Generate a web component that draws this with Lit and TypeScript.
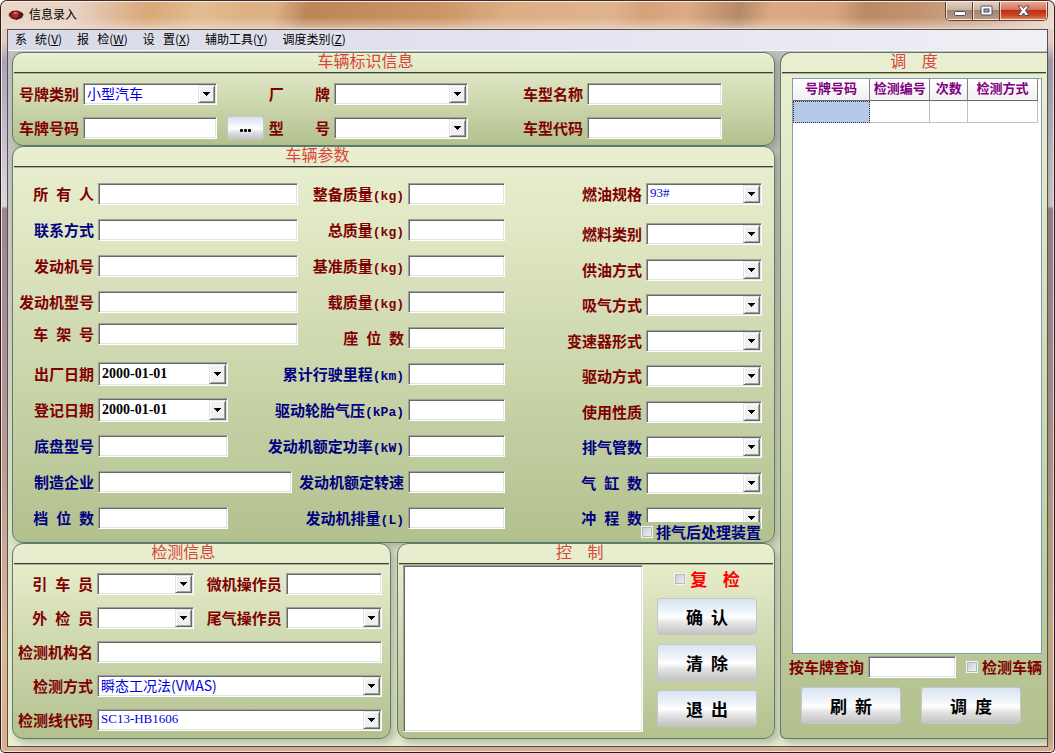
import { LitElement, html, css, svg, nothing } from "lit";
import { customElement, state } from "lit/decorators.js";
import { classMap } from "lit/directives/class-map.js";

type Tone = "red" | "navy";
type Kind = "text" | "combo" | "date";

interface Field {
  id: string;
  label: string;
  tone?: Tone;
  kind?: Kind;
  value?: string;
  size?: "short" | "medium";
}

const IDENTITY: Field[] = [
  { id: "plate-type", label: "号牌类别", kind: "combo", value: "小型汽车" },
  { id: "brand", label: "厂    牌", kind: "combo" },
  { id: "model-name", label: "车型名称" },
  { id: "plate-no", label: "车牌号码" },
  { id: "model", label: "型    号", kind: "combo" },
  { id: "model-code", label: "车型代码" },
];

const OWNER: Field[] = [
  { id: "owner", label: "所 有 人" },
  { id: "contact", label: "联系方式", tone: "navy" },
  { id: "engine-no", label: "发动机号" },
  { id: "engine-model", label: "发动机型号" },
];

const FRAME_NO: Field[] = [{ id: "vin", label: "车 架 号" }];

const DATES: Field[] = [
  { id: "made", label: "出厂日期", kind: "date", value: "2000-01-01", size: "short" },
  { id: "registered", label: "登记日期", kind: "date", value: "2000-01-01", size: "short" },
  { id: "chassis", label: "底盘型号", tone: "navy", size: "short" },
  { id: "maker", label: "制造企业", tone: "navy", size: "medium" },
  { id: "gears", label: "档 位 数", tone: "navy", size: "short" },
];

const MASSES: Field[] = [
  { id: "curb", label: "整备质量(kg)" },
  { id: "gross", label: "总质量(kg)" },
  { id: "reference", label: "基准质量(kg)" },
  { id: "payload", label: "载质量(kg)" },
  { id: "seats", label: "座 位 数" },
  { id: "mileage", label: "累计行驶里程(km)", tone: "navy" },
  { id: "tyre", label: "驱动轮胎气压(kPa)", tone: "navy" },
  { id: "power", label: "发动机额定功率(kW)", tone: "navy" },
  { id: "speed", label: "发动机额定转速", tone: "navy" },
  { id: "displacement", label: "发动机排量(L)", tone: "navy" },
];

const FUEL: Field[] = [{ id: "fuel-grade", label: "燃油规格", kind: "combo", value: "93#" }];

const TECH: Field[] = [
  { id: "fuel-type", label: "燃料类别", kind: "combo" },
  { id: "fuel-supply", label: "供油方式", kind: "combo" },
  { id: "intake", label: "吸气方式", kind: "combo" },
  { id: "gearbox", label: "变速器形式", kind: "combo" },
  { id: "drive", label: "驱动方式", kind: "combo" },
  { id: "usage", label: "使用性质", kind: "combo" },
  { id: "pipes", label: "排气管数", tone: "navy", kind: "combo" },
  { id: "cylinders", label: "气 缸 数", tone: "navy", kind: "combo" },
  { id: "strokes", label: "冲 程 数", tone: "navy", kind: "combo" },
];

const INSPECT_TOP: Field[] = [
  { id: "driver", label: "引 车 员", kind: "combo" },
  { id: "operator", label: "微机操作员" },
  { id: "outer", label: "外 检 员", kind: "combo" },
  { id: "gas", label: "尾气操作员", kind: "combo" },
];

const INSPECT_WIDE: Field[] = [
  { id: "agency", label: "检测机构名" },
  { id: "method", label: "检测方式", kind: "combo", value: "瞬态工况法(VMAS)" },
  { id: "line", label: "检测线代码", kind: "combo", value: "SC13-HB1606" },
];

const MENU: [string, string][] = [
  ["系   统", "V"],
  ["报   检", "W"],
  ["设   置", "X"],
  ["辅助工具", "Y"],
  ["调度类别", "Z"],
];

/* Latin letters and blanks are set in a half-width face beside the Chinese. */
const mixed = (text: string) =>
  text
    .split(/([\x20-\x7e]+)/)
    .filter(Boolean)
    .map((part) => (/^[\x20-\x7e]/.test(part) ? html`<span class="half">${part}</span>` : part));

@customElement("app-root")
export class AppRoot extends LitElement {
  @state() private selected = 0;

  static styles = css`
    :host {
      display: block;
      font-family: "Noto Sans CJK SC", sans-serif;
      font-size: 15px;
      line-height: 20px;
      color: #000;
    }
    * {
      box-sizing: border-box;
    }
    button,
    input,
    select,
    textarea {
      font: inherit;
      margin: 0;
      border-radius: 0;
      outline: none;
    }
    .half {
      font-family: "Liberation Mono", monospace;
      font-size: 13px;
      line-height: 0;
      white-space: pre;
    }

    .window {
      display: flex;
      flex-direction: column;
      min-height: 100vh;
      padding: 0 6px 5px;
      border: 1px solid #2b1d1e;
      border-top-color: #4a2a22;
      border-radius: 7px 7px 5px 5px;
      box-shadow: inset 0 0 0 1px #f2e4da;
      background: linear-gradient(#e6d2c4 0, #e4cdbf 40px, #a9a2bd 60px, #c9c3d4 150px, #ded6e0 205px, #9c8496 208px, #a9909a 340px, #b99a92 450px, #d9b896 640px, #d5b090 100%);
    }
    .titlebar {
      display: flex;
      align-items: flex-start;
      height: 28px;
      margin: 0 -5px;
      padding: 0 5px 0 6px;
      border-top: 1px solid #fbeee4;
      border-bottom: 1px solid #e9dacd;
      border-radius: 6px 6px 0 0;
      background:
        linear-gradient(rgba(255, 255, 255, 0) 60%, rgba(240, 225, 215, 0.55)),
        linear-gradient(100deg, #ead5c6 0, #e8d3c5 7%, #e0bfa4 10%, #d9a878 14%, #e2bd92 19%, #ddb184 23%, #dcb187 26%, #bd8659 29%, #c58e62 36%, #cc9668 42%, #dcae84 48%, #dfb38c 58%, #d5a27a 61%, #dcab84 65%, #b58a66 70%, #dba982 73%, #d8a67e 79%, #ba8a64 82%, #c2936f 87%, #d2ae94 94%, #ecdccf 100%);
    }
    .app-icon {
      width: 16px;
      height: 16px;
      margin: 5px 5px 0 0;
    }
    .caption {
      flex: 1;
      margin: 0;
      padding-top: 2px;
      font-size: 12px;
      font-weight: 400;
    }
    .win-buttons {
      display: flex;
      height: 19px;
      border: 1px solid #5b4238;
      border-top: 0;
      border-radius: 0 0 5px 5px;
      overflow: hidden;
    }
    .win-btn {
      display: grid;
      place-items: center;
      width: 27px;
      padding: 0;
      border: 1px solid rgba(255, 245, 238, 0.75);
      border-top: 0;
      background: linear-gradient(#e0cfc2 0, #cdb3a0 45%, #a58570 50%, #b99a84 100%);
    }
    .win-btn + .win-btn {
      box-shadow: -1px 0 #5b4238;
    }
    .win-btn.close {
      width: 47px;
      background: linear-gradient(#e8a795 0, #d9735a 45%, #bd2f12 50%, #cf4a25 80%, #e08058 100%);
    }

    .client {
      flex: 1;
      display: flex;
      flex-direction: column;
      border: 1px solid #55504e;
      background: linear-gradient(#bdbdbd, #c6c8bd 30%, #dfe5c8 75%, #e8eed0);
    }
    .menu {
      display: flex;
      gap: 15px;
      height: 21px;
      padding: 0 7px;
      border-bottom: 1px solid #fafafc;
      background: linear-gradient(90deg, #d9dae7, #e8e9f3 75%, #f0f0f5);
    }
    .menu button {
      height: 18px;
      padding: 0;
      border: 0;
      background: none;
      font-size: 12px;
      line-height: 18px;
      white-space: pre;
    }
    .content {
      flex: 1;
      display: grid;
      grid-template-columns: 763fr 267fr;
      gap: 5px;
      padding: 1px 0 7px 4px;
    }
    .left {
      display: grid;
      grid-template-rows: auto 1fr auto;
      min-width: 0;
    }
    .bottom {
      display: grid;
      grid-template-columns: 1fr 1fr;
      gap: 6px;
    }

    .panel {
      display: flex;
      flex-direction: column;
      min-width: 0;
      border: 1px solid #5f7b6d;
      border-radius: 11px;
      background: linear-gradient(#e9efd0, #e3eac8 15%, #b2c18e);
      box-shadow: 4px 4px 7px rgba(90, 95, 80, 0.35);
    }
    .panel.side {
      border-right: 0;
      border-radius: 11px 0 0 6px;
    }
    .panel h2 {
      height: 20px;
      margin: 0 1px;
      border-bottom: 1px solid #3b4236;
      box-shadow: 0 1px #aab093;
      font-size: 16px;
      font-weight: 400;
      line-height: 14px;
      text-align: center;
      color: #d8453a;
    }
    .panel.identity h2 {
      padding-right: 56px;
    }
    .panel.params h2 {
      padding-right: 152px;
    }
    .panel.inspect h2 {
      padding-right: 36px;
    }
    .panel.control h2 {
      padding-right: 12px;
    }

    label {
      flex: none;
      font-weight: 700;
      white-space: nowrap;
      text-align: right;
      color: #800000;
    }
    label.navy {
      color: #000080;
    }

    .box {
      min-width: 0;
      width: 100%;
      height: 22px;
      padding: 0 3px;
      border: 1px solid;
      border-color: #a0a0a0 #fff #fff #a0a0a0;
      box-shadow: inset 1px 1px #696969, inset -1px -1px #e3e3e3;
      background: #fff;
      color: #0000e0;
      font-size: 14px;
      line-height: 18px;
    }
    .combo {
      position: relative;
      display: block;
      min-width: 0;
      width: 100%;
    }
    .combo .box {
      display: block;
      padding-bottom: 2px;
      appearance: none;
    }
    .combo .box.latin {
      font-family: "Liberation Serif", serif;
      font-size: 13px;
    }
    .combo .box.date {
      height: 24px;
      padding-bottom: 0;
      font-family: "Liberation Serif", serif;
      font-size: 14px;
      font-weight: 700;
      color: #000;
    }
    .arrow {
      position: absolute;
      top: 2px;
      right: 2px;
      bottom: 2px;
      width: 17px;
      display: grid;
      place-items: center;
      border: 1px solid;
      border-color: #e3e3e3 #696969 #696969 #e3e3e3;
      box-shadow: inset 1px 1px #fff, inset -1px -1px #a0a0a0;
      background: #f0f0f0;
      pointer-events: none;
    }
    .short {
      width: 65%;
    }
    .medium {
      width: 97%;
    }

    .id-grid {
      display: grid;
      grid-template-columns: 60px 134fr 43px 62px 134fr 111px 135fr;
      gap: 10px 4px;
      align-items: center;
      padding: 9px 52px 5px 6px;
    }
    .id-grid > * {
      min-height: 20px;
    }
    .cell {
      display: flex;
      align-items: center;
      height: 24px;
    }
    .push {
      border: 1px solid #c3c6cc;
      border-radius: 3px;
      background: linear-gradient(#d8e3f1 0, #eff4fa 35%, #fff 52%, #e4e4e4 68%, #c3c3c3 100%);
      color: #000;
      font-weight: 700;
    }
    .push.more {
      display: grid;
      place-items: center;
      justify-self: end;
      width: 37px;
      height: 24px;
      padding: 4px 0 0;
    }
    .push.big {
      height: 37px;
      padding: 0;
      font-size: 17px;
    }

    .param-grid {
      flex: 1;
      display: grid;
      grid-template-columns: 280fr 207fr 257fr;
      padding: 15px 12px 12px 5px;
    }
    .col {
      position: relative;
      display: flex;
      flex-direction: column;
      min-width: 0;
    }
    .group {
      display: flex;
      flex-direction: column;
      gap: 12px;
    }
    .group + .group {
      margin-top: 8px;
    }
    .group + .group + .group,
    .col.tech .group + .group {
      margin-top: 16px;
    }
    .col.tech .group + .group {
      flex: 1;
      justify-content: space-between;
      gap: 0;
    }
    .row {
      display: flex;
      align-items: center;
      justify-content: flex-end;
      gap: 4px;
      height: 24px;
    }
    .col.owner label {
      width: 76px;
    }
    .slot {
      flex: 1;
      min-width: 0;
    }
    .slot > * {
      vertical-align: top;
    }
    .col.mass .slot {
      flex: none;
      width: 97px;
    }
    .col.tech .slot {
      flex: none;
      width: 116px;
    }
    .after {
      position: absolute;
      right: 1px;
      bottom: -11px;
      display: flex;
      align-items: center;
      gap: 3px;
      height: 19px;
      background: #b5c492;
    }
    .tick {
      appearance: none;
      flex: none;
      width: 12px;
      height: 12px;
      border: 1px solid #f4f4f4;
      box-shadow: inset 0 0 0 1px #b4b8bd;
      background: linear-gradient(135deg, #c6cacf, #f4f4f4);
    }
    .tick:checked {
      background: #3b6ea5;
    }

    .inspect-grid {
      display: grid;
      grid-template-columns: 75px 97fr 84px 96fr;
      gap: 10px 4px;
      align-items: center;
      padding: 8px 8px 6px 5px;
    }
    .inspect-grid .wide {
      grid-column: span 3;
    }

    .control-body {
      flex: 1;
      display: flex;
      gap: 14px;
      padding: 0 17px 6px 5px;
    }
    .control-body textarea {
      flex: 1;
      height: auto;
      margin-top: 1px;
      resize: none;
    }
    .actions {
      display: flex;
      flex-direction: column;
      gap: 9px;
      width: 100px;
      padding-top: 5px;
    }
    .recheck {
      display: flex;
      align-items: center;
      justify-content: center;
      gap: 4px;
      height: 20px;
    }
    .recheck label {
      font-size: 17px;
      color: #f00;
    }

    .side-body {
      flex: 1;
      display: flex;
      flex-direction: column;
      padding: 5px 5px 14px 8px;
    }
    .list {
      flex: 1;
      margin: 0 0 1px 3px;
      border: 1px solid #7f9db9;
      background: #fff;
    }
    table {
      width: calc(100% - 3px);
      border-collapse: separate;
      border-spacing: 0;
      table-layout: fixed;
    }
    th {
      height: 22px;
      padding: 0 0 3px;
      border-right: 1px solid #848484;
      border-bottom: 1px solid #696969;
      background: linear-gradient(#fff, #f0f0f0);
      font-size: 13px;
      line-height: 18px;
      font-weight: 700;
      color: #800080;
      white-space: nowrap;
    }
    td {
      height: 22px;
      padding: 0;
      border-right: 1px solid #c0c0c0;
      border-bottom: 1px solid #c0c0c0;
    }
    td.active {
      border: 1px dotted #3a3420;
      background: #b5caea;
    }
    .c1 {
      width: 31.5%;
    }
    .c2 {
      width: 24.5%;
    }
    .c3 {
      width: 15.5%;
    }
    .query {
      display: flex;
      align-items: center;
      gap: 4px;
      height: 24px;
    }
    .query .box {
      flex: 1;
    }
    .query .tick {
      margin-left: 6px;
    }
    .side-actions {
      display: grid;
      grid-template-columns: 1fr 1fr;
      gap: 20px;
      padding: 8px 21px 0 12px;
    }
  `;

  private control(f: Field) {
    const size = { short: f.size === "short", medium: f.size === "medium" };
    if (!f.kind || f.kind === "text") {
      return html`<input type="text" id=${f.id} class=${classMap({ box: true, ...size })} />`;
    }
    const latin = /^[\x20-\x7e]+$/.test(f.value ?? "");
    return html`<span class=${classMap({ combo: true, ...size })}>
      <select id=${f.id} class=${classMap({ box: true, latin, date: f.kind === "date" })}>
        <option>${f.value ?? ""}</option>
      </select>
      <span class="arrow"
        ><svg width="7" height="4" viewBox="0 0 7 4" aria-hidden="true" shape-rendering="crispEdges">
          ${svg`<path d="M0 0h7v1h-1v1h-1v1h-1v1h-1v-1h-1v-1h-1v-1h-1z" fill="#000" />`}
        </svg></span
      >
    </span>`;
  }

  private caption(f: Field) {
    return html`<label for=${f.id} class=${f.tone ?? "red"}>${mixed(f.label)}</label>`;
  }

  private group(fields: Field[]) {
    return html`<div class="group">
      ${fields.map((f) => html`<div class="row">${this.caption(f)}<span class="slot">${this.control(f)}</span></div>`)}
    </div>`;
  }

  private identity() {
    return html`<section class="panel identity">
      <h2>车辆标识信息</h2>
      <div class="id-grid">
        ${IDENTITY.map(
          (f, i) => html`${this.caption(f)}
            <div class="cell">${this.control(f)}</div>
            ${i === 0 ? html`<span></span>` : nothing}
            ${i === 3 ? html`<button class="push more" aria-label="选择">
              <svg width="11" height="3" viewBox="0 0 11 3" aria-hidden="true">
                <rect x="0" y="0" width="3" height="3" rx="1" /><rect x="4" y="0" width="3" height="3" rx="1" /><rect x="8" y="0" width="3" height="3" rx="1" />
              </svg>
            </button>` : nothing}`
        )}
      </div>
    </section>`;
  }

  private params() {
    return html`<section class="panel params">
      <h2>车辆参数</h2>
      <div class="param-grid">
        <div class="col owner">${this.group(OWNER)}${this.group(FRAME_NO)}${this.group(DATES)}</div>
        <div class="col mass">${this.group(MASSES)}</div>
        <div class="col tech">
          ${this.group(FUEL)}${this.group(TECH)}
          <div class="after">
            <input type="checkbox" class="tick" id="after" /><label for="after" class="navy">排气后处理装置</label>
          </div>
        </div>
      </div>
    </section>`;
  }

  private inspect() {
    return html`<section class="panel inspect">
      <h2>检测信息</h2>
      <div class="inspect-grid">
        ${INSPECT_TOP.map((f) => html`${this.caption(f)}<div class="cell">${this.control(f)}</div>`)}
        ${INSPECT_WIDE.map((f) => html`${this.caption(f)}<div class="cell wide">${this.control(f)}</div>`)}
      </div>
    </section>`;
  }

  private controls() {
    return html`<section class="panel control">
      <h2>${mixed("控  制")}</h2>
      <div class="control-body">
        <textarea class="box" aria-label="控制"></textarea>
        <div class="actions">
          <div class="recheck">
            <input type="checkbox" class="tick" id="recheck" /><label for="recheck">${mixed("复  检")}</label>
          </div>
          ${["确 认", "清 除", "退 出"].map((t) => html`<button class="push big">${mixed(t)}</button>`)}
        </div>
      </div>
    </section>`;
  }

  private dispatchPanel() {
    const heads = ["号牌号码", "检测编号", "次数", "检测方式"];
    return html`<section class="panel side">
      <h2>${mixed("调  度")}</h2>
      <div class="side-body">
        <div class="list">
          <table>
            <thead>
              <tr>
                ${heads.map((h, i) => html`<th class="c${i + 1}">${h}</th>`)}
              </tr>
            </thead>
            <tbody>
              <tr>
                ${heads.map(
                  (_, i) =>
                    html`<td class=${classMap({ active: i === this.selected })} @click=${() => (this.selected = i)}></td>`
                )}
              </tr>
            </tbody>
          </table>
        </div>
        <div class="query">
          <label for="query">按车牌查询</label>
          <input type="text" class="box" id="query" />
          <input type="checkbox" class="tick" id="tested" />
          <label for="tested">检测车辆</label>
        </div>
        <div class="side-actions">
          ${["刷 新", "调 度"].map((t) => html`<button class="push big">${mixed(t)}</button>`)}
        </div>
      </div>
    </section>`;
  }

  render() {
    return html`<div class="window">
      <header class="titlebar">
        <svg class="app-icon" viewBox="0 0 16 16" aria-hidden="true">
          <ellipse cx="8" cy="8" rx="7.5" ry="4" fill="#6b5a55" />
          <path d="M1 7l3-3 5-.5 4 1.500 2.500 2-2 4-5 2-5-1.500z" fill="#4a1814" />
          <path d="M3 6.500l4-2 4 1 1 3-4 3-4-1.500z" fill="#c22420" />
          <path d="M5 6l2-1 3 .5-2 1.500z" fill="#ee8076" />
          <circle cx="12" cy="9" r="2" fill="#3a2624" />
          <circle cx="4.500" cy="9.500" r="1.300" fill="#8a2a24" />
        </svg>
        <h1 class="caption">信息录入</h1>
        <div class="win-buttons">
          <button class="win-btn" aria-label="最小化">
            <svg width="14" height="12" viewBox="0 0 14 12"><rect x="1.500" y="6.500" width="11" height="4" rx="1" fill="#fff" stroke="#4c4f60" /></svg>
          </button>
          <button class="win-btn" aria-label="最大化">
            <svg width="13" height="12" viewBox="0 0 13 12">
              <rect x="1" y="1" width="11" height="9" rx="1" fill="#fff" stroke="#4c4f60" />
              <rect x="4" y="4" width="5" height="3" fill="#b89a86" stroke="#4c4f60" />
            </svg>
          </button>
          <button class="win-btn close" aria-label="关闭">
            <svg width="13" height="12" viewBox="0 0 13 12">
              <path d="M1 1h3.500l2 2.500 2-2.500H12L8.500 5.500 12 10.500H8.500l-2-2.500-2 2.500H1l3.500-5z" fill="#fff" stroke="#4c4f60" />
            </svg>
          </button>
        </div>
      </header>
      <main class="client">
        <nav class="menu">
          ${MENU.map(([name, key]) => html`<button>${name}(<u>${key}</u>)</button>`)}
        </nav>
        <div class="content">
          <div class="left">
            ${this.identity()} ${this.params()}
            <div class="bottom">${this.inspect()} ${this.controls()}</div>
          </div>
          ${this.dispatchPanel()}
        </div>
      </main>
    </div>`;
  }
}
